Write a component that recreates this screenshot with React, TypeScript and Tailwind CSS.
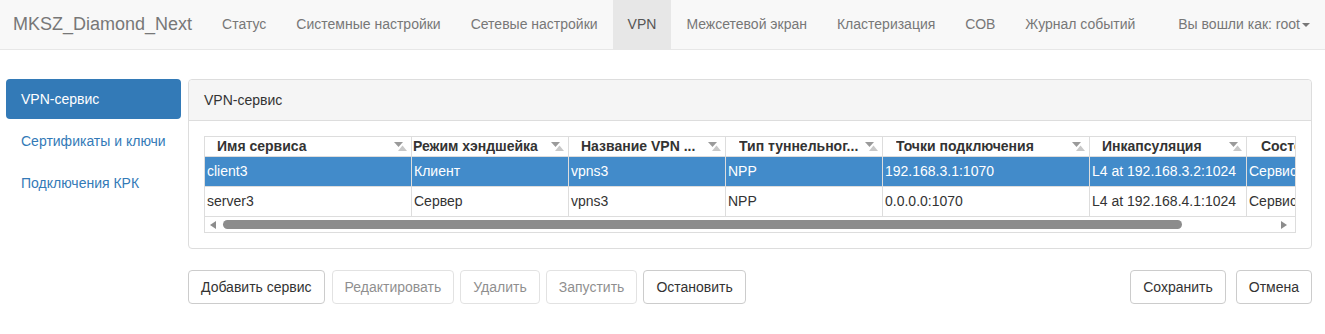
import React from "react";

const navItems = [
  "Статус",
  "Системные настройки",
  "Сетевые настройки",
  "VPN",
  "Межсетевой экран",
  "Кластеризация",
  "СОВ",
  "Журнал событий",
];

const sideItems = ["VPN-сервис", "Сертификаты и ключи", "Подключения КРК"];

const columns = [
  { title: "Имя сервиса", w: "w-[207px]", pad: "pl-[12px]" },
  { title: "Режим хэндшейка", w: "w-[157px]", pad: "pl-[1px]" },
  { title: "Название VPN ...", w: "w-[157px]", pad: "pl-[12px]" },
  { title: "Тип туннельног...", w: "w-[157px]", pad: "pl-[13px]" },
  { title: "Точки подключения", w: "w-[207px]", pad: "pl-[13px]" },
  { title: "Инкапсуляция", w: "w-[157px]", pad: "pl-[12px]" },
  { title: "Состояние", w: "w-[200px]", pad: "pl-[14px]" },
];

const rows = [
  ["client3", "Клиент", "vpns3", "NPP", "192.168.3.1:1070", "L4 at 192.168.3.2:1024", "Сервис запущен"],
  ["server3", "Сервер", "vpns3", "NPP", "0.0.0.0:1070", "L4 at 192.168.4.1:1024", "Сервис остановлен"],
];

function SortIcon() {
  return (
    <svg width="13" height="9" viewBox="0 0 13 9" className="shrink-0">
      <polygon points="0,0 9,0 4.5,5" fill="#9a9a9a" />
      <polygon points="4,9 13,9 8.5,3.5" fill="#c8c8c8" />
    </svg>
  );
}

function Btn({ label, disabled }: { label: string; disabled?: boolean }) {
  return (
    <button
      className={`h-[34px] px-[12px] border border-[#ccc] rounded-[4px] bg-white text-[14px] leading-[20px] text-[#333] whitespace-nowrap ${
        disabled ? "opacity-[0.55]" : ""
      }`}
    >
      {label}
    </button>
  );
}

export default function App() {
  return (
    <div className="w-[1325px] h-[334px] bg-white font-['Liberation_Sans',Arial,sans-serif] text-[14px] text-[#333] overflow-hidden">
      {/* Top navbar */}
      <div className="h-[50px] bg-[#f8f8f8] border-b border-[#e7e7e7] flex items-stretch">
        <div className="pl-[13px] pr-[15px] text-[18px] leading-[49px] text-[#777]">MKSZ_Diamond_Next</div>
        {navItems.map((item) => (
          <div
            key={item}
            className={`px-[15px] leading-[49px] ${
              item === "VPN" ? "bg-[#e7e7e7] text-[#555]" : "text-[#777]"
            }`}
          >
            {item}
          </div>
        ))}
        <div className="ml-auto pl-[15px] pr-[15px] leading-[49px] text-[#777] flex items-center">
          Вы вошли как: root
          <span className="ml-[2px] w-0 h-0 border-t-[4px] border-t-[#777] border-x-[4px] border-x-transparent" />
        </div>
      </div>

      <div className="flex pt-[29px] pl-[6px] pr-[13px] gap-[7px]">
        {/* Sidebar */}
        <div className="w-[175px] shrink-0 flex flex-col gap-[2px]">
          {sideItems.map((s, i) => (
            <div
              key={s}
              className={`h-[40px] px-[15px] leading-[40px] rounded-[4px] whitespace-nowrap ${
                i === 0 ? "bg-[#337ab7] text-white" : "text-[#337ab7]"
              }`}
            >
              {s}
            </div>
          ))}
        </div>

        {/* Content */}
        <div className="flex-1 min-w-0 flex flex-col">
          <div className="border border-[#ddd] rounded-[4px]">
            <div className="bg-[#f5f5f5] border-b border-[#ddd] px-[15px] py-[10px] leading-[20px] rounded-t-[4px]">
              VPN-сервис
            </div>
            <div className="p-[15px]">
              <div className="border border-[#ddd] overflow-hidden">
                <div className="flex w-max border-b border-[#ddd]">
                  {columns.map((c) => (
                    <div
                      key={c.title}
                      className={`${c.w} h-[19px] border-r border-[#ddd] flex items-center pr-[4px] ${c.pad} font-bold whitespace-nowrap overflow-hidden`}
                    >
                      <span className="flex-1 overflow-hidden">{c.title}</span>
                      <SortIcon />
                    </div>
                  ))}
                </div>
                {rows.map((r, ri) => (
                  <div
                    key={ri}
                    className={`flex w-max border-b border-[#ddd] ${ri === 0 ? "bg-[#428bca] text-white" : ""}`}
                  >
                    {r.map((cell, ci) => (
                      <div
                        key={ci}
                        className={`${columns[ci].w} h-[29px] leading-[29px] pl-[2px] border-r border-[#ddd] whitespace-nowrap overflow-hidden`}
                      >
                        {cell}
                      </div>
                    ))}
                  </div>
                ))}
                {/* Horizontal scrollbar */}
                <div className="h-[15px] flex items-center pl-[5px] pr-[5px]">
                  <span className="w-0 h-0 border-y-[4px] border-y-transparent border-r-[6px] border-r-[#8c8c8c]" />
                  <div className="ml-[7px] w-[959px] h-[9px] rounded-full bg-[#8c8c8c]" />
                  <span className="ml-auto mr-[3px] w-0 h-0 border-y-[4px] border-y-transparent border-l-[6px] border-l-[#8c8c8c]" />
                </div>
              </div>
            </div>
          </div>

          <div className="mt-[21px] flex items-center">
            <div className="flex gap-[6px]">
              <div className="mr-[1px]">
                <Btn label="Добавить сервис" />
              </div>
              <Btn label="Редактировать" disabled />
              <Btn label="Удалить" disabled />
              <Btn label="Запустить" disabled />
              <Btn label="Остановить" />
            </div>
            <div className="ml-auto flex gap-[10px]">
              <Btn label="Сохранить" />
              <Btn label="Отмена" />
            </div>
          </div>
        </div>
      </div>
    </div>
  );
}
